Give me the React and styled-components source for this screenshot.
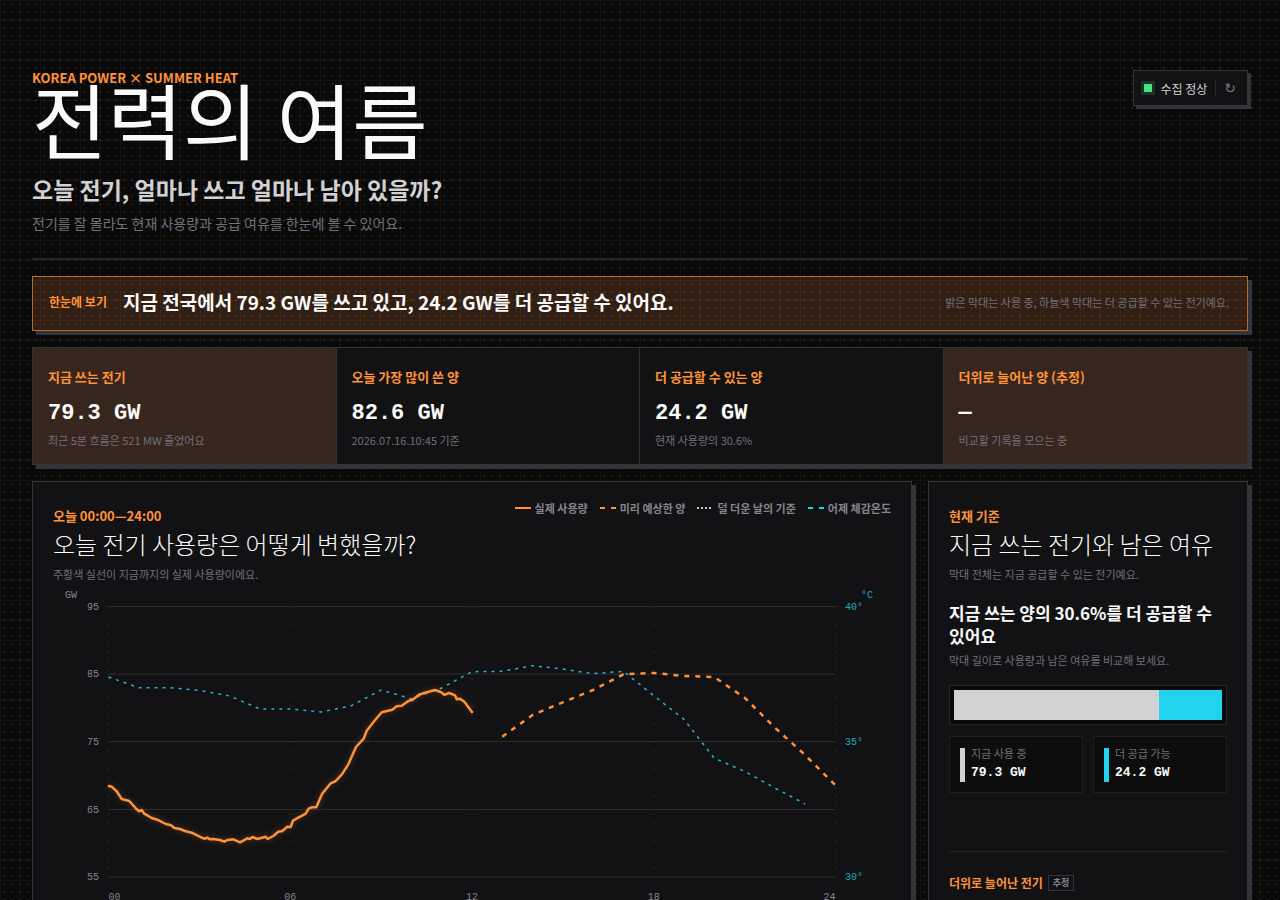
import React from 'react'
import styled, { createGlobalStyle } from 'styled-components';

const GlobalStyle = createGlobalStyle`
  * { box-sizing:border-box; }
  body {
    margin:0;
    color:#fafafa;
    background-color:#09090a;
    background-image:
      linear-gradient(rgba(255,132,60,0.06) 1px, transparent 1px),
      linear-gradient(90deg, rgba(255,132,60,0.06) 1px, transparent 1px),
      conic-gradient(from 270deg at 2px 2px, #1e1e21 90deg, transparent 0);
    background-size:20px 20px, 20px 20px, 8px 8px;
    background-position:0 0, 0 0, 3px 3px;
    font-family:"Noto Sans CJK KR", sans-serif;
  }
  h1, h2, p, dl, dd { margin:0; }
`;

const StyledPage = styled.main`
  padding:70px 32px 32px;
`;

const StyledHeader = styled.header`
  display:flex;
  justify-content:space-between;
  align-items:flex-start;
  padding-bottom:25px;
  border-bottom:2px solid #27272a;
`;

const StyledEyebrow = styled.p`
  font-size:${({ $size }) => $size || 13}px;
  font-weight:700;
  line-height:16px;
  color:#ff9238;
`;

const StyledTitle = styled.h1`
  font-size:82px;
  font-weight:400;
  line-height:64px;
`;

const StyledSubtitle = styled.p`
  margin-top:23px;
  font-size:23px;
  font-weight:700;
  line-height:32px;
  color:#d1d1d4;
`;

const StyledLead = styled.p`
  margin-top:8px;
  font-size:14px;
  line-height:20px;
  color:#70707a;
`;

const StyledStatus = styled.div`
  display:flex;
  align-items:center;
  height:36px;
  padding:0 8px;
  font-size:12px;
  color:#d1d1d4;
  background:#121214;
  border:1px solid #34343b;
  box-shadow:3px 3px 0 #34343b;
`;

const StyledDot = styled.i`
  width:8px;
  height:8px;
  margin:0 8px 0 2px;
  background:#4ade80;
  box-shadow:0 0 0 3px #1b3325;
`;

const StyledRefresh = styled.button`
  height:16px;
  margin-left:8px;
  padding:0 3px 0 8px;
  border:0;
  border-left:1px solid #27272a;
  background:none;
  font:14px/14px "DejaVu Sans", sans-serif;
  color:#77777f;
`;

const StyledBanner = styled.section`
  display:flex;
  align-items:center;
  gap:16px;
  height:55px;
  margin-top:16px;
  padding:0 18px 3px 16px;
  background:rgba(255,140,66,0.17);
  border:1px solid #b36b30;
  box-shadow:4px 4px 0 #34343b;
`;

const StyledBannerText = styled.strong`
  flex:1;
  font-size:19px;
  line-height:28px;
`;

const StyledNote = styled.p`
  font-size:11px;
  line-height:16px;
  color:#70707a;
`;

const StyledStats = styled.section`
  display:grid;
  grid-template-columns:repeat(4, 1fr);
  margin-top:16px;
  background:#121214;
  border:1px solid #34343b;
  box-shadow:4px 4px 0 #34343b;
`;

const StyledStat = styled.article`
  padding:21px 15px 16px;
  background:${({ $hot }) => ($hot ? '#37261d' : '#121214')};

  &:not(:last-child) {
    border-right:1px solid #2e2e31;
  }
`;

const StyledValue = styled.p`
  margin:17px 0 6px;
  font-family:"Liberation Mono", monospace;
  font-size:22px;
  font-weight:700;
  line-height:24px;
`;

const StyledPanels = styled.div`
  display:grid;
  grid-template-columns:minmax(0, 1fr) 320px;
  gap:16px;
  margin-top:16px;
`;

const StyledPanel = styled.section`
  padding:26px 20px 20px;
  background:#121214;
  border:1px solid #34343b;
  box-shadow:4px 4px 0 #34343b;
`;

const StyledPanelTop = styled.div`
  display:flex;
  justify-content:space-between;
  align-items:flex-start;
`;

const StyledPanelTitle = styled.h2`
  margin:4px 0 6px;
  font-size:24px;
  font-weight:300;
  line-height:32px;
  white-space:nowrap;
`;

const StyledLegend = styled.ul`
  display:flex;
  gap:12px;
  margin:-8px 0 0;
  padding:0;
  list-style:none;
  font-size:11px;
  font-weight:700;
  line-height:16px;
  color:#85858d;
  white-space:nowrap;

  li {
    display:flex;
    align-items:center;
    gap:4px;
  }
`;

const StyledChart = styled.svg`
  display:block;
  width:100%;
  margin-top:4px;

  text {
    font-family:"Liberation Mono", monospace;
    font-size:10px;
    fill:#85858d;
  }

  .temp {
    fill:#22a9bb;
  }
`;

const StyledReserve = styled.p`
  margin:19px 0 5px;
  font-size:17px;
  font-weight:700;
  line-height:23px;
`;

const StyledGauge = styled.div`
  display:flex;
  height:40px;
  margin:17px 0 11px;
  padding:4px;
  background:#09090a;
  border:1px solid #27272a;
`;

const StyledGaugePart = styled.div`
  background:${({ $color }) => $color};
`;

const StyledSplit = styled.dl`
  display:grid;
  grid-template-columns:1fr 1fr;
  gap:10px;
`;

const StyledSplitItem = styled.div`
  padding:6px 10px 10px;
  background:#0d0d0e;
  border:1px solid #1f1f22;
  display:grid;
  grid-template-columns:5px 1fr;
  column-gap:6px;
  align-items:center;

  &::before {
    content:'';
    grid-row:1 / 3;
    align-self:end;
    height:34px;
    background:${({ $color }) => $color};
  }

  dt {
    font-size:11px;
    line-height:20px;
    color:#70707a;
  }

  dd {
    font-family:"Liberation Mono", monospace;
    font-size:13px;
    font-weight:700;
    line-height:19px;
  }
`;

const StyledHeat = styled.div`
  display:flex;
  align-items:center;
  gap:5px;
  margin-top:58px;
  padding-top:23px;
  border-top:1px solid #27272a;
`;

const StyledTag = styled.span`
  padding:0 4px;
  border:1px solid #34343b;
  font-size:9px;
  font-weight:700;
  line-height:14px;
  color:#85858d;
`;

const ORANGE = '#ff9238';
const CYAN = '#22d3ee';

const stats = [
    { label: '지금 쓰는 전기', value: '79.3 GW', note: '최근 5분 흐름은 521 MW 줄었어요', hot: true },
    { label: '오늘 가장 많이 쓴 양', value: '82.6 GW', note: '2026.07.16.10:45 기준' },
    { label: '더 공급할 수 있는 양', value: '24.2 GW', note: '현재 사용량의 30.6%' },
    { label: '더위로 늘어난 양 (추정)', value: '—', note: '비교할 기록을 모으는 중', hot: true },
];

const legend = [
    { label: '실제 사용량', color: ORANGE },
    { label: '미리 예상한 양', color: ORANGE, dash: '5 6' },
    { label: '덜 더운 날의 기준', color: '#c4c4c8', dash: '2 2' },
    { label: '어제 체감온도', color: CYAN, dash: '5 6' },
];

const actual = '56,200 58.7,200.7 63.7,205.3 68.7,213 76.3,215 83.7,223.3 86,225.3 88.7,224 91.3,227.7 98.7,232 104.3,233.7 112.7,238 118,239.3 121.3,242 127,243 132,245 138.7,246.7 148.7,251.7 151,252.7 154.3,251.7 157,253.3 160.3,253 167,254 171.3,255.7 174.3,254 180.3,253.3 187,256.3 194.3,252.3 197,253 199.3,251 204.3,253 212.7,250.7 214.7,253 220.3,250 225.3,245.7 229.3,245 234.3,240.7 237.7,241 240,234.7 245.3,231.7 252.7,227.7 255.7,222.7 258.7,221.3 263.3,221.3 269,208 277.7,197.3 282.7,195 288.7,188.7 295.3,178.3 303,161 310.7,152.7 313.7,144.7 320.3,136.3 328.7,126.3 339.3,123.7 343.7,120.3 348.7,119.7 355.3,115 359.7,113.7 366,108.7 373.7,106.3 382,104 387.7,106 391.3,108.7 396.3,107 402,109.3 403.7,113.3 407,112.7 411.3,115.7 419,126';

// y values, one per hour
const forecast = [150.7, 129, 116.3, 104, 88.3, 87, 90, 91, 111.7, 141.7, 169, 199.3];
const feelsLike = [91, 101.7, 101.7, 104.3, 110, 123, 123, 126, 120, 104, 112.7, 102, 85.7, 85.3, 79.7, 83, 87.7, 85.3, 109.7, 133.3, 172.3, 185.3, 202, 218];

const hourX = (h) => 55.5 + h * 30.29;
const toPoints = (values, start) => values.map((y, i) => `${hourX(start + i)},${y}`).join(' ');

const rows = [[95, 20.5], [85, 88], [75, 155.5], [65, 223.5], [55, 291]];
const temps = [['40°', 20.5], ['35°', 155.5], ['30°', 291]];
const hours = [['00', 0, 'start'], ['06', 6, 'middle'], ['12', 12, 'middle'], ['18', 18, 'middle'], ['24', 24, 'end']];

const DemandChart = () => {
    return (
        <StyledChart viewBox="0 0 838 330" role="img" aria-label="오늘 전기 사용량">
            <text x="12" y="12">GW</text>
            <text x="808" y="12" className="temp">°C</text>
            {rows.map(([gw, y]) => (
                <g key={gw}>
                    <line x1="55" x2="782.5" y1={y} y2={y} stroke="#2c2c2f" />
                    <text x="46" y={y + 3} textAnchor="end">{gw}</text>
                </g>
            ))}
            {temps.map(([label, y]) => (
                <text key={label} x="792" y={y + 3} className="temp">{label}</text>
            ))}
            {hours.map(([label, h, anchor]) => (
                <g key={label}>
                    <line x1={hourX(h)} x2={hourX(h)} y1="20" y2="291" stroke="#29292c" strokeDasharray="2 7" />
                    <text x={hourX(h)} y="314" textAnchor={anchor}>{label}</text>
                </g>
            ))}
            <polyline points={toPoints(feelsLike, 0)} fill="none" stroke={CYAN} strokeWidth="1.5" strokeDasharray="3 5" opacity="0.85" />
            <polyline points={toPoints(forecast, 13)} fill="none" stroke={ORANGE} strokeWidth="2.5" strokeDasharray="5 6" />
            <polyline
                points={actual}
                fill="none"
                stroke={ORANGE}
                strokeWidth="2.5"
                strokeLinejoin="round"
                strokeLinecap="round"
                filter="drop-shadow(0 0 3px rgba(255,146,56,0.3))"
            />
        </StyledChart>
    )
}

const Legend = () => {
    return (
        <StyledLegend>
            {legend.map(({ label, color, dash }) => (
                <li key={label}>
                    <svg width="16" height="2" aria-hidden="true">
                        <line x2="16" y1="1" y2="1" stroke={color} strokeWidth="2" strokeDasharray={dash} />
                    </svg>
                    {label}
                </li>
            ))}
        </StyledLegend>
    )
}

const App = () => {
    return (
        <>
            <GlobalStyle />
            <StyledPage>
                <StyledHeader>
                    <div>
                        <StyledEyebrow>KOREA POWER × SUMMER HEAT</StyledEyebrow>
                        <StyledTitle>전력의 여름</StyledTitle>
                        <StyledSubtitle>오늘 전기, 얼마나 쓰고 얼마나 남아 있을까?</StyledSubtitle>
                        <StyledLead>전기를 잘 몰라도 현재 사용량과 공급 여유를 한눈에 볼 수 있어요.</StyledLead>
                    </div>
                    <StyledStatus>
                        <StyledDot />
                        수집 정상
                        <StyledRefresh type="button" aria-label="새로고침">↻</StyledRefresh>
                    </StyledStatus>
                </StyledHeader>

                <StyledBanner>
                    <StyledEyebrow $size={12}>한눈에 보기</StyledEyebrow>
                    <StyledBannerText>지금 전국에서 79.3 GW를 쓰고 있고, 24.2 GW를 더 공급할 수 있어요.</StyledBannerText>
                    <StyledNote>밝은 막대는 사용 중, 하늘색 막대는 더 공급할 수 있는 전기예요.</StyledNote>
                </StyledBanner>

                <StyledStats>
                    {stats.map(({ label, value, note, hot }) => (
                        <StyledStat key={label} $hot={hot}>
                            <StyledEyebrow>{label}</StyledEyebrow>
                            <StyledValue>{value}</StyledValue>
                            <StyledNote>{note}</StyledNote>
                        </StyledStat>
                    ))}
                </StyledStats>

                <StyledPanels>
                    <StyledPanel>
                        <StyledPanelTop>
                            <div>
                                <StyledEyebrow>오늘 00:00—24:00</StyledEyebrow>
                                <StyledPanelTitle>오늘 전기 사용량은 어떻게 변했을까?</StyledPanelTitle>
                                <StyledNote>주황색 실선이 지금까지의 실제 사용량이에요.</StyledNote>
                            </div>
                            <Legend />
                        </StyledPanelTop>
                        <DemandChart />
                    </StyledPanel>

                    <StyledPanel>
                        <StyledEyebrow>현재 기준</StyledEyebrow>
                        <StyledPanelTitle>지금 쓰는 전기와 남은 여유</StyledPanelTitle>
                        <StyledNote>막대 전체는 지금 공급할 수 있는 전기예요.</StyledNote>
                        <StyledReserve>지금 쓰는 양의 30.6%를 더 공급할 수 있어요</StyledReserve>
                        <StyledNote>막대 길이로 사용량과 남은 여유를 비교해 보세요.</StyledNote>
                        <StyledGauge>
                            <StyledGaugePart $color="#d1d1d4" style={{ flexGrow: 79.3 }} />
                            <StyledGaugePart $color={CYAN} style={{ flexGrow: 24.2 }} />
                        </StyledGauge>
                        <StyledSplit>
                            <StyledSplitItem $color="#d1d1d4">
                                <dt>지금 사용 중</dt>
                                <dd>79.3 GW</dd>
                            </StyledSplitItem>
                            <StyledSplitItem $color={CYAN}>
                                <dt>더 공급 가능</dt>
                                <dd>24.2 GW</dd>
                            </StyledSplitItem>
                        </StyledSplit>
                        <StyledHeat>
                            <StyledEyebrow $size={12}>더위로 늘어난 전기</StyledEyebrow>
                            <StyledTag>추정</StyledTag>
                        </StyledHeat>
                    </StyledPanel>
                </StyledPanels>
            </StyledPage>
        </>
    )
}

export default App
